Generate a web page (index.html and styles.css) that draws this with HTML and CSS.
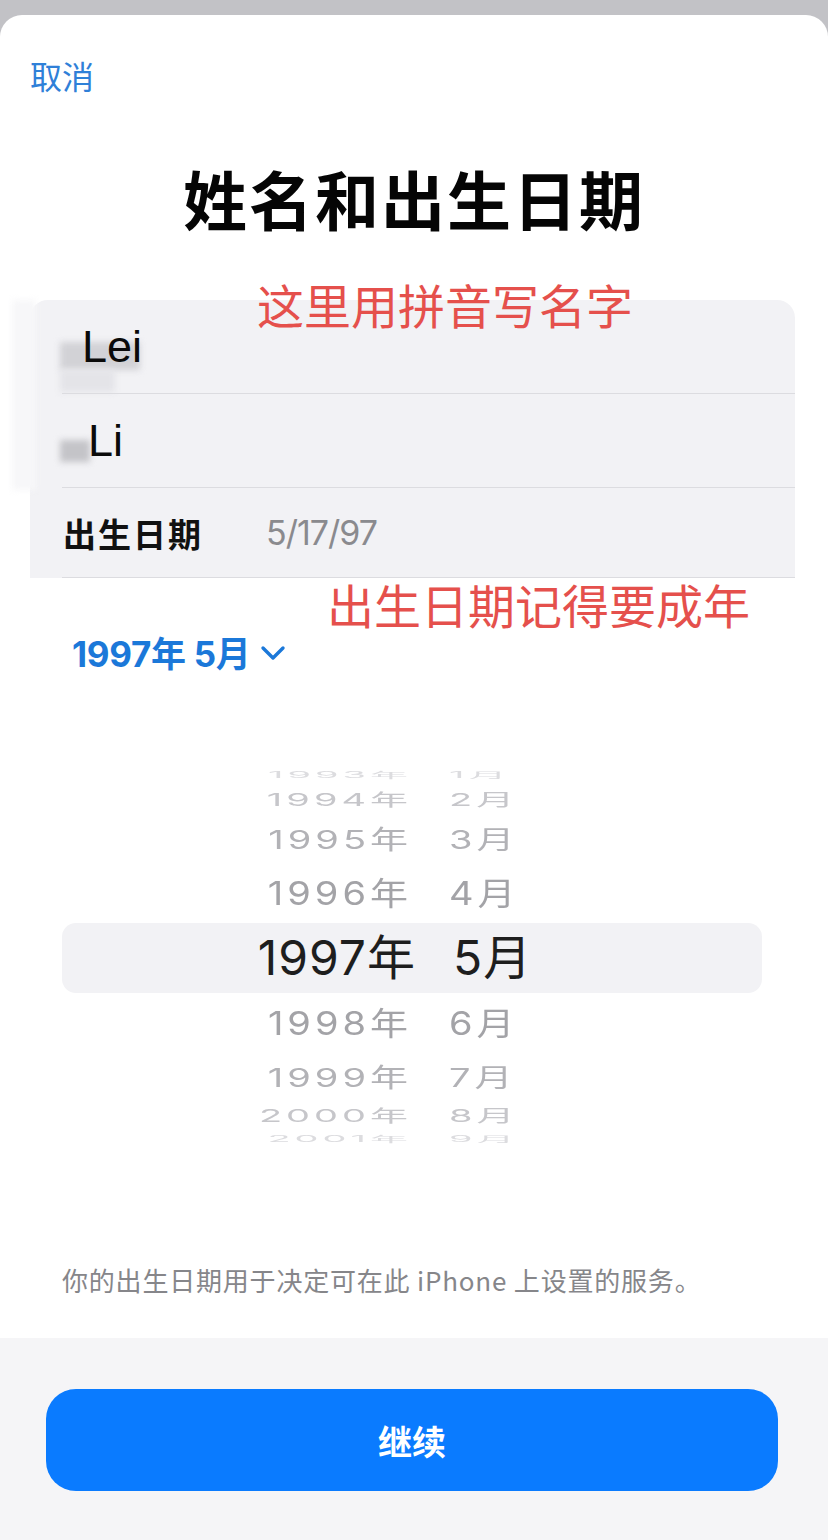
FILE: index.html
```html
<!DOCTYPE html>
<html lang="zh-CN">
<head>
  <meta charset="UTF-8">
  <meta name="viewport" content="width=device-width, initial-scale=1.0">
  <title>姓名和出生日期</title>
  <link rel="stylesheet" href="styles.css">
</head>
<body>

  <div class="sheet">
    <div class="top-bar">
      <span class="cancel">取消</span>
    </div>

    <h1 class="title">姓名和出生日期</h1>

    <div class="form-card">
      <!-- redacted bits around the names -->
      <div class="smudge smudge-edge"></div>
      <div class="smudge smudge-first"></div>
      <div class="smudge smudge-first-b"></div>
      <div class="smudge smudge-last"></div>

      <div class="form-row">
        <span class="name-value">Lei</span>
      </div>
      <div class="form-row">
        <span class="name-value name-short">Li</span>
      </div>
      <div class="form-row">
        <span class="row-label">出生日期</span>
        <span class="row-value">5/17/97</span>
      </div>
    </div>

    <div class="month-toggle">
      <span>1997年 5月</span>
      <svg class="chevron" width="26" height="16" viewBox="0 0 26 16">
        <path d="M3 3 L13 13 L23 3" fill="none" stroke="currentColor" stroke-width="3.4" stroke-linecap="round" stroke-linejoin="round"/>
      </svg>
    </div>

    <div class="picker">
      <div class="wheel-row far-3"><span class="year">1993年</span><span class="month">1月</span></div>
      <div class="wheel-row far-2"><span class="year">1994年</span><span class="month">2月</span></div>
      <div class="wheel-row far-1"><span class="year">1995年</span><span class="month">3月</span></div>
      <div class="wheel-row near"><span class="year">1996年</span><span class="month">4月</span></div>
      <div class="wheel-row selected"><span class="year">1997年</span><span class="month">5月</span></div>
      <div class="wheel-row near"><span class="year">1998年</span><span class="month">6月</span></div>
      <div class="wheel-row far-1"><span class="year">1999年</span><span class="month">7月</span></div>
      <div class="wheel-row far-2 low"><span class="year">2000年</span><span class="month">8月</span></div>
      <div class="wheel-row far-3 low"><span class="year">2001年</span><span class="month">9月</span></div>
    </div>

    <p class="note">你的出生日期用于决定可在此 iPhone 上设置的服务。</p>

    <div class="footer">
      <button class="btn">继续</button>
    </div>

    <div class="hint hint-name">这里用拼音写名字</div>
    <div class="hint hint-date">出生日期记得要成年</div>
  </div>

</body>
</html>
```

FILE: styles.css
```css
body {
  margin: 0;
  background-color: #c2c2c6;
  font-family: Inter, "Noto Sans CJK SC", sans-serif;
}
.sheet {
  position: relative;
  margin-top: 15px;
  height: 1525px;
  background-color: white;
  border-radius: 22px 22px 0 0;
  display: flex;
  flex-direction: column;
  overflow: hidden;
}
.top-bar {
  padding: 40px 30px 0;
  height: 40px;
}
.cancel {
  font-family: "Noto Sans CJK SC", sans-serif;
  font-size: 32px;
  line-height: 40px;
  color: #2f80d8;
}
.title {
  margin: 62px 0 0;
  font-family: "Noto Sans CJK SC", sans-serif;
  font-size: 64px;
  line-height: 80px;
  font-weight: 700;
  letter-spacing: 2px;
  text-align: center;
  color: #050505;
}

/* name + birthday card */
.form-card {
  position: relative;
  margin: 63px 33px 0 30px;
  background-color: #f2f2f5;
  border-radius: 18px 18px 0 0;
}
.form-row {
  position: relative;
  display: flex;
  align-items: center;
  height: 93px;
  margin-left: 32px;
  padding-left: 20px;
  border-bottom: 1px solid #dcdce0;
}
.form-row:nth-child(7) {
  height: 89px;
  padding-left: 1px;
}
.name-value {
  font-family: "Liberation Sans", Arial, sans-serif;
  font-size: 45px;
  color: #0a0a0a;
}
.name-short {
  padding-left: 6px;
}
.row-label {
  width: 203px;
  font-family: "Noto Sans CJK SC", sans-serif;
  font-size: 33px;
  font-weight: 700;
  letter-spacing: 2px;
  color: #111;
}
.row-value {
  font-size: 34px;
  letter-spacing: -1px;
  color: #8a8a8e;
}
.smudge {
  position: absolute;
  filter: blur(3px);
}
.smudge-edge {
  left: -18px;
  top: 0;
  width: 24px;
  height: 190px;
  background-color: #f7f7f9;
}
.smudge-first {
  left: 30px;
  top: 42px;
  width: 80px;
  height: 28px;
  background-color: #d2d2d6;
}
.smudge-first-b {
  left: 30px;
  top: 70px;
  width: 55px;
  height: 22px;
  background-color: #e4e4e8;
}
.smudge-last {
  left: 30px;
  top: 140px;
  width: 30px;
  height: 22px;
  background-color: #c4c4c8;
}

.month-toggle {
  display: flex;
  align-items: center;
  gap: 10px;
  margin: 53px 0 0 72px;
  height: 40px;
  font-size: 35px;
  font-weight: 700;
  letter-spacing: -0.3px;
  color: #1b78d9;
}
.chevron {
  margin-top: 4px;
}

/* date wheel */
.picker {
  margin-top: 94px;
  display: flex;
  flex-direction: column;
}
.wheel-row {
  display: flex;
  align-items: center;
  gap: 37px;
  font-size: 38px;
  line-height: 1;
  letter-spacing: 4px;
  color: #a3a3a7;
}
.wheel-row .year {
  flex: 0 0 412px;
  text-align: right;
}
.wheel-row.near {
  height: 60px;
}
.wheel-row.near span {
  transform: scaleY(0.85);
}
.wheel-row.far-1 {
  height: 48px;
  color: #b2b2b6;
}
.wheel-row.far-1 span {
  transform: scaleY(0.68);
}
.wheel-row.far-2 {
  height: 30px;
  color: #c6c6ca;
}
.wheel-row.far-2 span {
  transform: scaleY(0.46);
}
.wheel-row.far-2.low {
  height: 29px;
}
.wheel-row.far-3 {
  height: 20px;
  color: #dcdcdf;
}
.wheel-row.far-3 span {
  transform: scaleY(0.22);
}
.wheel-row.far-3.low {
  height: 18px;
}
.wheel-row.selected {
  height: 70px;
  margin: 0 66px 0 62px;
  border-radius: 14px;
  background-color: #f2f2f5;
  font-size: 48px;
  letter-spacing: 1px;
  color: #1e1e1e;
}
.wheel-row.selected .year {
  flex-basis: 354px;
}

.note {
  margin: 116px 0 0 62px;
  font-family: "Noto Sans CJK SC", sans-serif;
  font-size: 26px;
  line-height: 32px;
  letter-spacing: 0.8px;
  color: #86868a;
}

.footer {
  flex: 1;
  margin-top: 42px;
  padding: 51px 50px 0 46px;
  background-color: #f5f5f7;
}
.btn {
  width: 100%;
  height: 102px;
  border: none;
  border-radius: 30px;
  background-color: #0a7bff;
  color: white;
  font-family: "Noto Sans CJK SC", sans-serif;
  font-size: 34px;
  font-weight: 700;
  cursor: pointer;
}

/* red hand-written notes on the screenshot */
.hint {
  position: absolute;
  font-family: "Noto Sans CJK SC", sans-serif;
  font-size: 47px;
  line-height: 60px;
  color: #e5504c;
}
.hint-name {
  left: 257px;
  top: 259px;
}
.hint-date {
  left: 327px;
  top: 559px;
}
```
